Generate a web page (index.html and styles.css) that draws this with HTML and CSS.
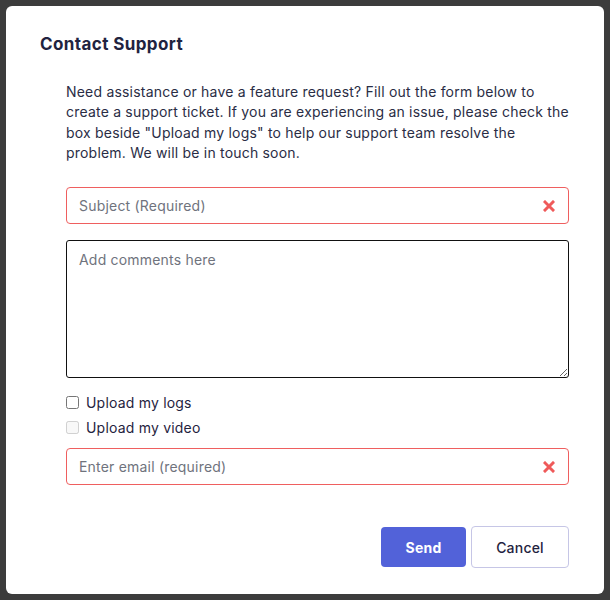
FILE: index.html
```html
<!DOCTYPE html>
<html>
<head>
<meta charset="utf-8">
<link rel="stylesheet" href="styles.css">
</head>
<body>
<div class="backdrop">
  <div class="modal">
    <h2 class="title">Contact Support</h2>
    <div class="content">
      <p class="intro">Need assistance or have a feature request? Fill out the form below to create a support ticket. If you are experiencing an issue, please check the box beside "Upload my logs" to help our support team resolve the problem. We will be in touch soon.</p>
      <div class="field invalid">
        <input class="text-input" type="text" placeholder="Subject (Required)">
        <svg class="err-icon" width="12" height="12" viewBox="0 0 12 12"><path d="M2 2 L10 10 M10 2 L2 10" stroke="#ef5a5a" stroke-width="3" stroke-linecap="square"/></svg>
      </div>
      <textarea class="comments" placeholder="Add comments here"></textarea>
      <div class="checks">
        <label class="check"><input type="checkbox"><span>Upload my logs</span></label>
        <label class="check"><input type="checkbox" disabled><span>Upload my video</span></label>
      </div>
      <div class="field invalid email">
        <input class="text-input" type="text" placeholder="Enter email (required)">
        <svg class="err-icon" width="12" height="12" viewBox="0 0 12 12"><path d="M2 2 L10 10 M10 2 L2 10" stroke="#ef5a5a" stroke-width="3" stroke-linecap="square"/></svg>
      </div>
      <div class="actions">
        <button class="btn primary">Send</button>
        <button class="btn secondary">Cancel</button>
      </div>
    </div>
  </div>
</div>
</body>
</html>
```
FILE: styles.css
```css
* { box-sizing: border-box; }
html, body {
  margin: 0;
  padding: 0;
  width: 610px;
  height: 600px;
  overflow: hidden;
  background: #3c3c3c;
  font-family: Inter, "Noto Sans", sans-serif;
  letter-spacing: 0.2px;
}
.backdrop {
  padding: 6px;
  height: 600px;
}
.modal {
  width: 598px;
  height: 588px;
  background: #ffffff;
  border-radius: 6px;
  padding: 26px 35px 0 34px;
}
.title {
  margin: 0;
  font-size: 17px;
  line-height: 24px;
  font-weight: 700;
  color: #1f2340;
  letter-spacing: 0.4px;
}
.content {
  padding-left: 26px;
}
.intro {
  margin: 26px -3px 0 0;
  font-size: 14px;
  line-height: 20.3px;
  color: #2a2d45;
  letter-spacing: 0.2px;
}
.field {
  position: relative;
  margin-top: 24px;
}
.text-input {
  display: block;
  width: 100%;
  height: 37px;
  border: 1px solid #ef5f5f;
  border-radius: 4px;
  padding: 0 40px 0 12px;
  font-family: inherit;
  font-size: 14px;
  letter-spacing: 0.2px;
  color: #1f2340;
  outline: none;
}
.text-input::placeholder, .comments::placeholder {
  color: #6f737d;
}
.err-icon {
  position: absolute;
  right: 14px;
  top: 13px;
}
.comments {
  display: block;
  width: 100%;
  height: 138px;
  margin-top: 16px;
  border: 1px solid #111;
  border-radius: 3px;
  padding: 10px 12px;
  font-family: inherit;
  font-size: 14px;
  letter-spacing: 0.2px;
  resize: vertical;
  outline: none;
}
.checks {
  display: flex;
  flex-direction: column;
  gap: 5px;
  margin-top: 14px;
}
.check {
  display: flex;
  align-items: center;
  gap: 7px;
  height: 20px;
  font-size: 14px;
  color: #1f2340;
}
.check input {
  margin: 0;
  width: 13px;
  height: 13px;
}
.field.email {
  margin-top: 11px;
}
.actions {
  display: flex;
  justify-content: flex-end;
  align-items: center;
  gap: 5px;
  margin-top: 41px;
}
.btn {
  font-family: inherit;
  font-size: 14px;
  letter-spacing: 0.2px;
  border-radius: 4px;
  cursor: pointer;
}
.primary {
  width: 85px;
  height: 40px;
  background: #5262d9;
  color: #fff;
  border: none;
  font-weight: 700;
}
.secondary {
  width: 98px;
  height: 42px;
  background: #fff;
  color: #1f2340;
  border: 1px solid #c6c6e6;
  font-weight: 500;
}
```
